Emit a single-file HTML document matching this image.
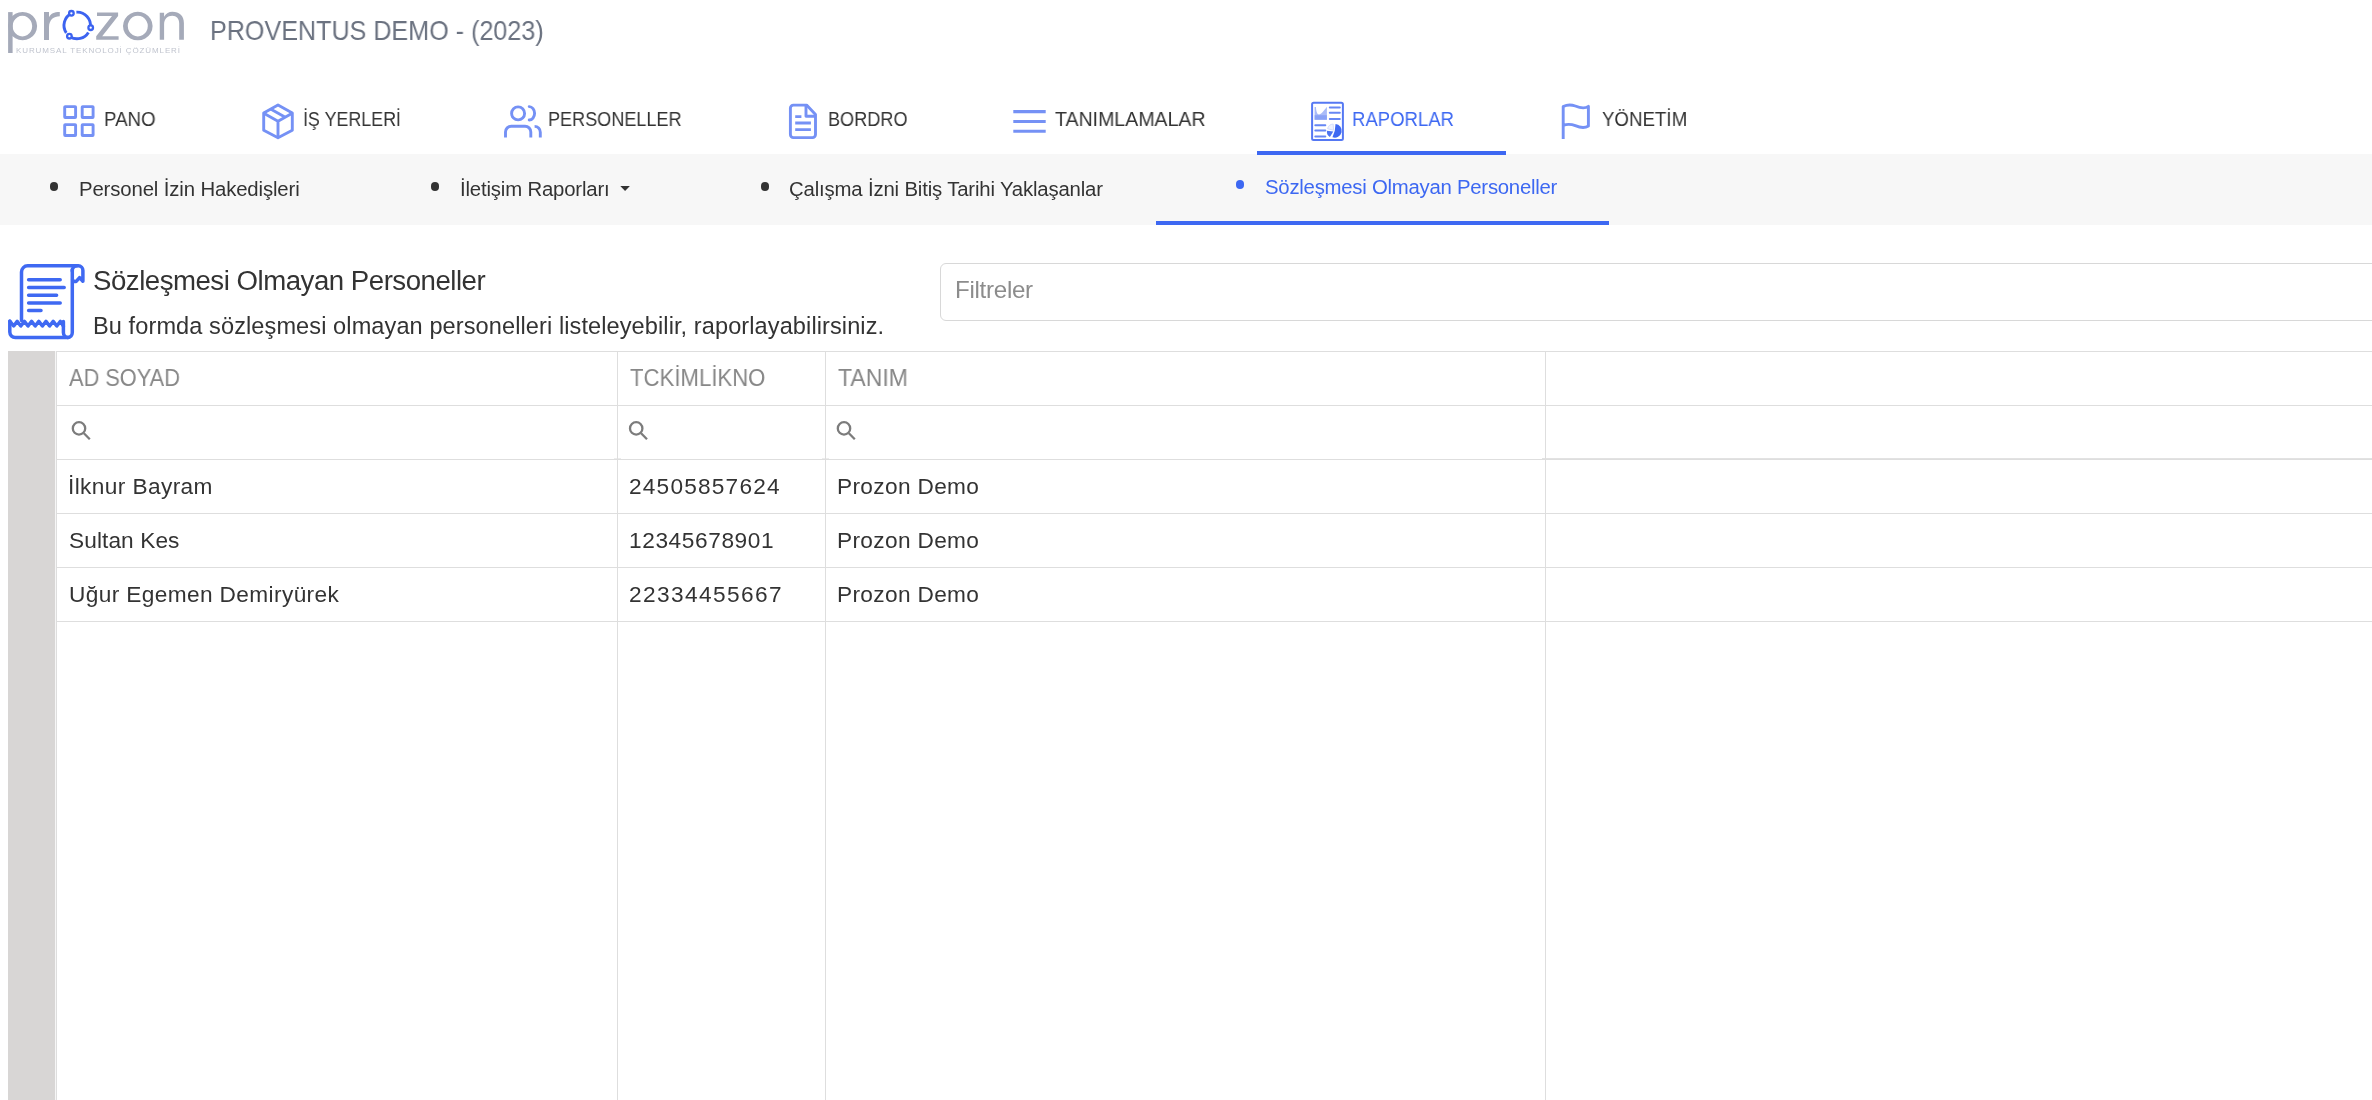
<!DOCTYPE html>
<html lang="tr">
<head>
<meta charset="utf-8">
<title>Sözleşmesi Olmayan Personeller - Prozon</title>
<style>
html,body{margin:0;padding:0;background:#fff;}
body{width:2372px;height:1100px;position:relative;overflow:hidden;font-family:"Liberation Sans",sans-serif;}
.t{will-change:transform;position:absolute;line-height:1;white-space:nowrap;transform-origin:0 0;font-family:"Liberation Sans",sans-serif;}
.abs{position:absolute;}
header.top{position:absolute;left:0;top:0;width:2372px;height:154px;background:#fff;}
nav.sub{position:absolute;left:0;top:154px;width:2372px;height:71px;background:#f7f7f7;}
.ul{position:absolute;background:#3d68f2;}
.dot{position:absolute;width:8.5px;height:8.5px;border-radius:50%;background:#333;}
.filter{position:absolute;left:940px;top:263px;width:1460px;height:56px;border:1px solid #d8d8d8;border-radius:6px;background:#fff;}
.strip{position:absolute;left:8px;top:351px;width:47px;height:749px;background:#d8d6d5;}
.hl{position:absolute;left:56px;width:2316px;height:1px;background:#dedede;}
.vl{position:absolute;top:351px;width:1px;height:749px;background:#dedede;}
svg{position:absolute;overflow:visible;}
</style>
</head>
<body>
<header class="top"></header>
<nav class="sub"></nav>

<!-- logo -->
<svg class="abs" style="left:0;top:0;will-change:transform" width="200" height="60" viewBox="0 0 200 60">
  <g fill="#a5aab9">
    <rect x="8.1" y="12.1" width="4.5" height="40.9"/>
    <path fill-rule="evenodd" d="M22.6,11.95 a14.5,14.15 0 1 0 0.01,0 Z M22.4,15.8 a9.8,10.3 0 1 1 -0.01,0 Z"/>
    <path d="M44,12.1 H49 V17.2 C50.6,13.9 54,12.1 59.8,12.1 V16.3 C53.6,16.3 49.4,19.6 49,27 V40 H44 Z"/>
    <path d="M97,12.4 H118.1 V16 L102.2,36.2 H118.6 V39.8 H96.2 V36.2 L112,16 H97 Z"/>
    <path fill-rule="evenodd" d="M137.8,11.85 a14.8,14.25 0 1 0 0.01,0 Z M137.8,15.7 a10,10.4 0 1 1 -0.01,0 Z"/>
    <path d="M159.75,12.7 H164.1 V16.8 C166,13.5 169,11.85 172.3,11.85 C179.5,11.85 183.9,16 183.9,23 V39.8 H179.2 V23.5 C179.2,18.5 176.5,15.7 172.3,15.7 C167.5,15.7 164.1,19 164.1,24.5 V39.8 H159.75 Z"/>
  </g>
  <g fill="none" stroke="#3c63f0" stroke-width="2.9">
    <path d="M76.4,12.2 A13.3,13.3 0 0 1 90.3,27.6"/>
    <path d="M88.4,32.4 A13.3,13.3 0 0 1 70.2,36.9"/>
    <path d="M66.3,32.9 A13.3,13.3 0 0 1 71.6,13.4"/>
  </g>
  <g fill="#fff" stroke="#3c63f0" stroke-width="2.3">
    <circle cx="71.4" cy="13.3" r="2.3"/>
    <circle cx="90.7" cy="27.7" r="2.3"/>
    <circle cx="69.4" cy="36.2" r="2.3"/>
  </g>
  <text x="16" y="53" font-family="Liberation Sans" font-size="8" fill="#c0c4ce" textLength="164" lengthAdjust="spacing">KURUMSAL TEKNOLOJİ ÇÖZÜMLERİ</text>
</svg>

<!-- nav icons -->
<svg class="abs" style="left:0;top:0" width="1800" height="160" viewBox="0 0 1800 160">
  <g fill="none" stroke="#7591f5" stroke-width="2.9" stroke-linejoin="round">
    <!-- pano grid -->
    <rect x="64.7" y="106.6" width="10.9" height="10.9" rx="0.5"/>
    <rect x="82.2" y="106.6" width="10.9" height="10.9" rx="0.5"/>
    <rect x="64.7" y="124.6" width="10.9" height="10.9" rx="0.5"/>
    <rect x="82.2" y="124.6" width="10.9" height="10.9" rx="0.5"/>
    <!-- box -->
    <path d="M278,105 L292.3,113 V130.2 L278,137.8 L263.7,130.2 V113 Z" stroke-linecap="round"/>
    <path d="M263.8,113.2 L278,121.2 L292.2,113.2 M278,121.2 V137.6"/>
    <path d="M270.6,109 L285.3,117.2"/>
    <!-- users -->
    <circle cx="518.1" cy="113.4" r="6.5"/>
    <path d="M529.2,106.6 A5.4,6.7 0 0 1 529.2,120" stroke-linecap="round"/>
    <path d="M505.5,137.6 V132 A5.8,5.8 0 0 1 511.3,126.2 H525 A5.8,5.8 0 0 1 530.8,132 V137.6"/>
    <path d="M534.6,126.4 A5.7,5.8 0 0 1 540.3,132.2 V137.6"/>
    <!-- document -->
    <path d="M806.6,105.1 H793.4 A3,3 0 0 0 790.4,108.1 V134.6 A3,3 0 0 0 793.4,137.6 H812.5 A3,3 0 0 0 815.5,134.6 V114.4 Z"/>
    <path d="M806,105.3 V116.2 H815.3"/>
    <path d="M795.2,116.6 H801.4 M795.2,123 H810.9 M795.2,129.6 H810.9"/>
    <!-- list -->
    <path d="M1013.3,111.6 H1045.7 M1013.3,121.5 H1045.7 M1013.3,131.2 H1045.7" stroke-width="3.1" stroke-linecap="butt"/>
    <!-- flag -->
    <path d="M1563.2,138.9 V106.5 C1567,104.6 1571,104.4 1575.3,106 C1579.5,107.8 1584,109.4 1588.4,106.4 V126 C1584,128.8 1579.5,127.4 1575.3,125.7 C1571,124 1567,124.1 1563.2,125.3" stroke-linecap="butt"/>
  </g>
  <!-- reports (active) -->
  <g>
        <rect x="1312.1" y="102.8" width="30.8" height="37.1" rx="1.5" fill="none" stroke="#5578f3" stroke-width="2"/>
    <path d="M1314.6,107 L1315.9,107 C1316.3,112 1317.2,114.4 1319,114.4 C1321,114.4 1322,112.6 1323.5,111 C1325,109.5 1326,108 1326.9,106.8 L1326.9,119.8 L1314.6,119.8 Z" fill="#a9bbf8"/>
    <path d="M1314.6,115.2 H1326.9 V119.8 H1314.6 Z" fill="#7f9af5" opacity="0.75"/>
    <path d="M1329.8,107.5 H1339.8 M1329.8,112.7 H1339.8 M1329.8,118.9 H1339.8 M1315.3,125.2 H1325.3 M1315.3,130.5 H1325.3 M1315.3,136.6 H1325.3" stroke="#6686f4" stroke-width="2" stroke-linecap="round"/>
    <path d="M1334.80,130.80 L1335.52,123.94 A6.9,6.9 0 1 1 1332.44,137.28 Z" fill="#3f69f2"/>
    <path d="M1333.30,131.60 L1329.91,137.03 A6.4,6.4 0 0 1 1326.96,130.71 Z" fill="#4d74f2"/>
    <path d="M1333.60,130.20 L1327.58,128.70 A6.2,6.2 0 0 1 1333.17,124.02 Z" fill="#eef2fe" stroke="#d3dcfb" stroke-width="1"/>
  </g>
</svg>

<div class="ul" style="left:1257px;top:151px;width:249px;height:4px"></div>

<!-- subnav bullets -->
<div class="dot" style="left:49.7px;top:182.2px"></div>
<div class="dot" style="left:430.8px;top:182.2px"></div>
<div class="dot" style="left:760.8px;top:182.2px"></div>
<div class="dot" style="left:1235.8px;top:180.2px;background:#3d68f2"></div>
<svg class="abs" style="left:0;top:0" width="700" height="220" viewBox="0 0 700 220">
  <path d="M620.3,186 H629.9 L625.1,191 Z" fill="#333"/>
</svg>
<div class="ul" style="left:1156px;top:221px;width:453px;height:4px"></div>

<!-- page heading icon -->
<svg class="abs" style="left:0;top:0" width="100" height="350" viewBox="0 0 100 350">
  <g fill="none" stroke="#3f69f2" stroke-width="3.5" stroke-linecap="round" stroke-linejoin="round">
    <path d="M21.5,320.6 V272 A6.2,6.2 0 0 1 27.7,265.8 H78.3 A4.6,4.6 0 0 1 82.9,270.4 V281.2 L79.6,277.6 L76.2,281.4 A2.8,2.8 0 0 1 72.6,279.8"/>
    <path d="M72.3,271 A4.6,4.6 0 0 1 76.9,265.8"/>
    <path d="M72.3,270 V332.6 A4.5,4.9 0 0 1 67.8,337.5 A4.5,4.9 0 0 1 63.4,332.6 V321.5"/>
    <path d="M9.8,321.2 V332 A5.5,5.5 0 0 0 15.3,337.5 H68.3"/>
    <path d="M9.8,321.2 L13.7,326 L17.2,321.4 L20.8,326 L24.4,321.4 L28,326 L31.6,321.4 L35.2,326 L38.8,321.4 L42.4,326 L46,321.4 L49.6,326 L53.2,321.4 L56.8,326 L60.4,321.4 L63.4,326"/>
    <path d="M28.6,279.8 H60.2 M28.6,287.6 H64.2 M28.6,295.3 H56.6 M28.6,302.9 H60.2 M28.6,310.4 H41"/>
  </g>
</svg>

<div class="filter"></div>

<!-- table -->
<div class="strip"></div>
<div class="abs" style="left:55px;top:351px;width:1px;height:749px;background:#f6f6f6"></div>
<div class="hl" style="top:351px"></div>
<div class="hl" style="top:405px"></div>
<div class="hl" style="top:459px"></div>
<div class="hl" style="top:513px"></div>
<div class="hl" style="top:567px"></div>
<div class="hl" style="top:621px"></div>
<div class="abs" style="left:614px;top:458px;width:7px;height:1px;background:#ececec"></div>
<div class="abs" style="left:822px;top:458px;width:7px;height:1px;background:#ececec"></div>
<div class="abs" style="left:1542px;top:458px;width:830px;height:1px;background:#e2e2e2"></div>
<div class="vl" style="left:56px"></div>
<div class="vl" style="left:617px"></div>
<div class="vl" style="left:825px"></div>
<div class="vl" style="left:1545px"></div>

<svg class="abs" style="left:0;top:0" width="900" height="460" viewBox="0 0 900 460">
  <g fill="none" stroke="#7c7c7c" stroke-width="2.3">
    <circle cx="79" cy="428.4" r="6.2"/><path d="M83.9,433.2 L89.8,439.2"/>
    <circle cx="636.2" cy="428.4" r="6.2"/><path d="M641.1,433.2 L647,439.2"/>
    <circle cx="844" cy="428.4" r="6.2"/><path d="M848.9,433.2 L854.8,439.2"/>
  </g>
</svg>

<div class="t" style="left:210.23px;top:18.13px;font-size:26.89px;transform:scaleX(0.9349);color:#6b7280">PROVENTUS DEMO - (2023)</div>
<div class="t" style="left:103.97px;top:108.82px;font-size:20.06px;transform:scaleX(0.9324);color:#333333">PANO</div>
<div class="t" style="left:303.11px;top:109.02px;font-size:20.06px;transform:scaleX(0.8911);color:#333333">İŞ YERLERİ</div>
<div class="t" style="left:547.90px;top:108.82px;font-size:20.06px;transform:scaleX(0.9012);color:#333333">PERSONELLER</div>
<div class="t" style="left:827.90px;top:108.82px;font-size:20.06px;transform:scaleX(0.9028);color:#333333">BORDRO</div>
<div class="t" style="left:1055.20px;top:108.82px;font-size:20.06px;transform:scaleX(0.9748);color:#333333">TANIMLAMALAR</div>
<div class="t" style="left:1351.98px;top:109.02px;font-size:20.06px;transform:scaleX(0.9245);color:#3d68f2">RAPORLAR</div>
<div class="t" style="left:1601.80px;top:109.02px;font-size:20.06px;transform:scaleX(0.9324);color:#333333">YÖNETİM</div>
<div class="t" style="left:78.80px;top:178.77px;font-size:20.35px;letter-spacing:-0.132px;color:#333333">Personel İzin Hakedişleri</div>
<div class="t" style="left:459.80px;top:178.77px;font-size:20.35px;letter-spacing:-0.174px;color:#333333">İletişim Raporları</div>
<div class="t" style="left:789.00px;top:178.77px;font-size:20.35px;letter-spacing:-0.165px;color:#333333">Çalışma İzni Bitiş Tarihi Yaklaşanlar</div>
<div class="t" style="left:1265.40px;top:176.67px;font-size:20.35px;letter-spacing:-0.250px;color:#3d68f2">Sözleşmesi Olmayan Personeller</div>
<div class="t" style="left:92.50px;top:267.01px;font-size:27.62px;letter-spacing:-0.481px;color:#333333">Sözleşmesi Olmayan Personeller</div>
<div class="t" style="left:93.10px;top:314.96px;font-size:23.55px;letter-spacing:0.093px;color:#333333">Bu formda sözleşmesi olmayan personelleri listeleyebilir, raporlayabilirsiniz.</div>
<div class="t" style="left:955.20px;top:278.17px;font-size:24.13px;letter-spacing:-0.286px;color:#8c8c8c">Filtreler</div>
<div class="t" style="left:69.20px;top:365.62px;font-size:23.84px;transform:scaleX(0.9136);color:#878787">AD SOYAD</div>
<div class="t" style="left:630.40px;top:365.62px;font-size:23.84px;transform:scaleX(0.9297);color:#878787">TCKİMLİKNO</div>
<div class="t" style="left:838.10px;top:365.62px;font-size:23.84px;transform:scaleX(0.9659);color:#878787">TANIM</div>
<div class="t" style="left:67.90px;top:474.71px;font-size:22.67px;letter-spacing:0.393px;color:#333333">İlknur Bayram</div>
<div class="t" style="left:68.90px;top:528.61px;font-size:22.67px;letter-spacing:0.095px;color:#333333">Sultan Kes</div>
<div class="t" style="left:68.90px;top:582.51px;font-size:22.67px;letter-spacing:0.378px;color:#333333">Uğur Egemen Demiryürek</div>
<div class="t" style="left:629.00px;top:474.71px;font-size:22.67px;letter-spacing:1.200px;color:#333333">24505857624</div>
<div class="t" style="left:629.00px;top:528.61px;font-size:22.67px;letter-spacing:0.600px;color:#333333">12345678901</div>
<div class="t" style="left:629.00px;top:582.51px;font-size:22.67px;letter-spacing:1.400px;color:#333333">22334455667</div>
<div class="t" style="left:836.50px;top:474.71px;font-size:22.67px;letter-spacing:0.339px;color:#333333">Prozon Demo</div>
<div class="t" style="left:836.50px;top:528.61px;font-size:22.67px;letter-spacing:0.339px;color:#333333">Prozon Demo</div>
<div class="t" style="left:836.50px;top:582.51px;font-size:22.67px;letter-spacing:0.339px;color:#333333">Prozon Demo</div>
</body>
</html>
